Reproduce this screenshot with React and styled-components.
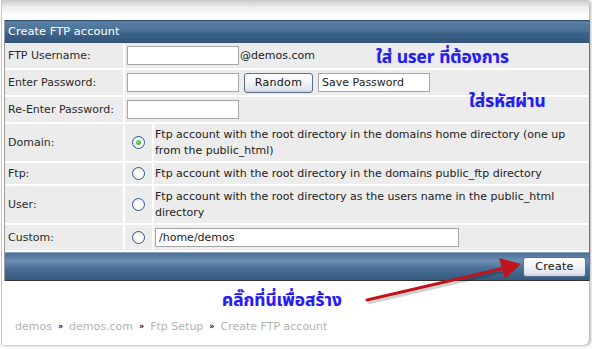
import React from 'react'
import styled, { createGlobalStyle } from 'styled-components'

const GlobalStyle = createGlobalStyle`
  html, body {
    margin: 0;
    padding: 0;
    background: #ffffff;
  }
  body {
    font-family: "DejaVu Sans", Verdana, sans-serif;
    font-size: 11px;
    color: #222;
  }
`

const Page = styled.div`
  position: relative;
  width: 592px;
  height: 349px;
  overflow: hidden;
  background: #fff;
`

const Sheet = styled.div`
  margin-left: 1px;
  width: 587px;
  height: 345px;
  border-left: 1px solid #b4c8de;
  border-bottom-right-radius: 6px;
  box-shadow: 2px 1px 3px rgba(0, 0, 0, 0.28);
  background: #fff;
  display: flex;
  flex-direction: column;
`

const TopFade = styled.div`
  height: 20px;
  background: linear-gradient(#c9c9c9 0%, #ededed 35%, #ffffff 75%);
`

const Panel = styled.div`
  margin-left: 2px;
  width: 584px;
  border-left: 1px solid #9a9a9a;
  border-right: 1px solid #6b6b6b;
`

const Header = styled.div`
  height: 22px;
  border-top: 1px solid #2c4b6c;
  background: linear-gradient(#587ea4 0%, #4d7399 40%, #3c6189 60%, #315679 100%);
  color: #fff;
  font-size: 11.3px;
  line-height: 22px;
  padding-left: 3px;
  letter-spacing: 0.1px;
`

const Grid = styled.div`
  display: grid;
  grid-template-columns: 118px 27px 1fr;
  grid-template-rows: 25px 25px 25px 37px 21px 37px 25px;
  gap: 2px;
  padding: 0 0 2px 0;
  background: #ffffff;
`

const Cell = styled.div`
  background: #ececec;
  display: flex;
  align-items: center;
  padding-left: ${p => p.$pad || 0}px;
  grid-column: ${p => (p.$span ? `span ${p.$span}` : 'auto')};
  justify-content: ${p => (p.$center ? 'center' : 'flex-start')};
  line-height: 16px;
`

const Label = styled(Cell)`
  padding-left: 3px;
  color: #2a2a2a;
`

const TextInput = styled.input`
  box-sizing: border-box;
  width: ${p => p.$w}px;
  height: 19px;
  border: 1px solid #a7a7a7;
  background: #fff;
  font-family: "DejaVu Sans", Verdana, sans-serif;
  font-size: 11px;
  color: #222;
  padding: 0 3px;
  margin: 0;
  outline: none;
`

const Suffix = styled.span`
  margin-left: 1px;
  color: #222;
`

const XPButton = styled.button`
  box-sizing: border-box;
  height: 20px;
  width: ${p => p.$w}px;
  margin: 0 ${p => p.$mr || 0}px 0 ${p => p.$ml || 0}px;
  border: 1px solid #5c6f8a;
  border-radius: 3px;
  background: linear-gradient(#ffffff 0%, #f2f4f8 45%, #dfe5ee 85%, #c9d3e2 100%);
  font-family: "DejaVu Sans", Verdana, sans-serif;
  font-size: 11px;
  color: #111;
  padding: 0;
  letter-spacing: 0.3px;
`

const Radio = styled.span`
  box-sizing: border-box;
  width: 13px;
  height: 13px;
  border-radius: 50%;
  border: 1px solid #2a5a8a;
  background: radial-gradient(circle at 60% 65%, #ffffff 30%, #dde3ea 100%);
  display: flex;
  align-items: center;
  justify-content: center;
  &::after {
    content: '';
    width: 5px;
    height: 5px;
    border-radius: 50%;
    background: ${p => (p.$checked ? 'radial-gradient(circle at 40% 40%, #7fe07f, #1b9a1b)' : 'transparent')};
  }
`

const Footer = styled.div`
  height: 27px;
  border-top: 1px solid #8da5bf;
  border-bottom: 1px solid #333;
  background: linear-gradient(#4b7098 0%, #6f90b4 30%, #4b6f96 55%, #345a80 100%);
  display: flex;
  align-items: center;
  justify-content: flex-end;
  padding-right: 3px;
`

const Below = styled.div`
  flex: 1;
  padding: 39px 0 0 13px;
`

const Crumbs = styled.div`
  color: #b3b3b3;
  font-size: 11px;
  display: flex;
  align-items: center;
  gap: 6px;
`

const Sep = styled.span`
  color: #222;
  font-size: 8px;
  font-weight: bold;
`

const Note = styled.div`
  position: absolute;
  left: ${p => p.$x}px;
  top: ${p => p.$y}px;
  color: #1f1ff2;
  font-family: Tahoma, "Noto Sans Thai", "Noto Sans", "DejaVu Sans", sans-serif;
  font-weight: bold;
  font-size: 17.3px;
  white-space: nowrap;
  text-shadow: 0 0 1px rgba(120, 0, 220, 0.35);
`

const Arrow = styled.svg`
  position: absolute;
  left: 360px;
  top: 255px;
  overflow: visible;
`

const radioRows = [
  {
    label: 'Domain:',
    checked: true,
    text: 'Ftp account with the root directory in the domains home directory (one up from the public_html)',
  },
  { label: 'Ftp:', text: 'Ftp account with the root directory in the domains public_ftp directory' },
  {
    label: 'User:',
    text: 'Ftp account with the root directory as the users name in the public_html directory',
  },
]

const crumbs = ['demos', 'demos.com', 'Ftp Setup', 'Create FTP account']

const App = () => {
  return (
    <Page>
      <GlobalStyle />
      <Sheet>
        <TopFade />
        <Panel>
          <Header>Create FTP account</Header>
          <Grid>
            <Label>FTP Username:</Label>
            <Cell $span={2} $pad={2}>
              <TextInput $w={112} />
              <Suffix>@demos.com</Suffix>
            </Cell>

            <Label>Enter Password:</Label>
            <Cell $span={2} $pad={2}>
              <TextInput $w={112} />
              <XPButton $w={69} $ml={5} $mr={5}>Random</XPButton>
              <TextInput $w={112} defaultValue="Save Password" />
            </Cell>

            <Label>Re-Enter Password:</Label>
            <Cell $span={2} $pad={2}>
              <TextInput $w={112} />
            </Cell>

            {radioRows.map(r => (
              <React.Fragment key={r.label}>
                <Label>{r.label}</Label>
                <Cell $center>
                  <Radio $checked={r.checked} />
                </Cell>
                <Cell $pad={1}>{r.text}</Cell>
              </React.Fragment>
            ))}

            <Label>Custom:</Label>
            <Cell $center>
              <Radio />
            </Cell>
            <Cell $pad={1}>
              <TextInput $w={304} defaultValue="/home/demos" />
            </Cell>
          </Grid>
          <Footer>
            <XPButton $w={63}>Create</XPButton>
          </Footer>
        </Panel>
        <Below>
          <Crumbs>
            {crumbs.map((c, i) => (
              <React.Fragment key={c}>
                {i > 0 && <Sep>»</Sep>}
                <span>{c}</span>
              </React.Fragment>
            ))}
          </Crumbs>
        </Below>
      </Sheet>

      <Note $x={376} $y={45}>ใส่ user ที่ต้องการ</Note>
      <Note $x={469} $y={89}>ใส่รหัสผ่าน</Note>
      <Note $x={222} $y={288}>คลิ๊กที่นี่เพื่อสร้าง</Note>

      <Arrow width="170" height="60" viewBox="0 0 170 60">
        <line x1="8" y1="48" x2="150" y2="15" stroke="rgba(0,0,0,0.18)" strokeWidth="3" />
        <line x1="7" y1="45" x2="145" y2="13" stroke="#c0141c" strokeWidth="3" strokeLinecap="round" />
        <polygon points="161,9 139,3 145,24" fill="#c0141c" />
      </Arrow>
    </Page>
  )
}

export default App
